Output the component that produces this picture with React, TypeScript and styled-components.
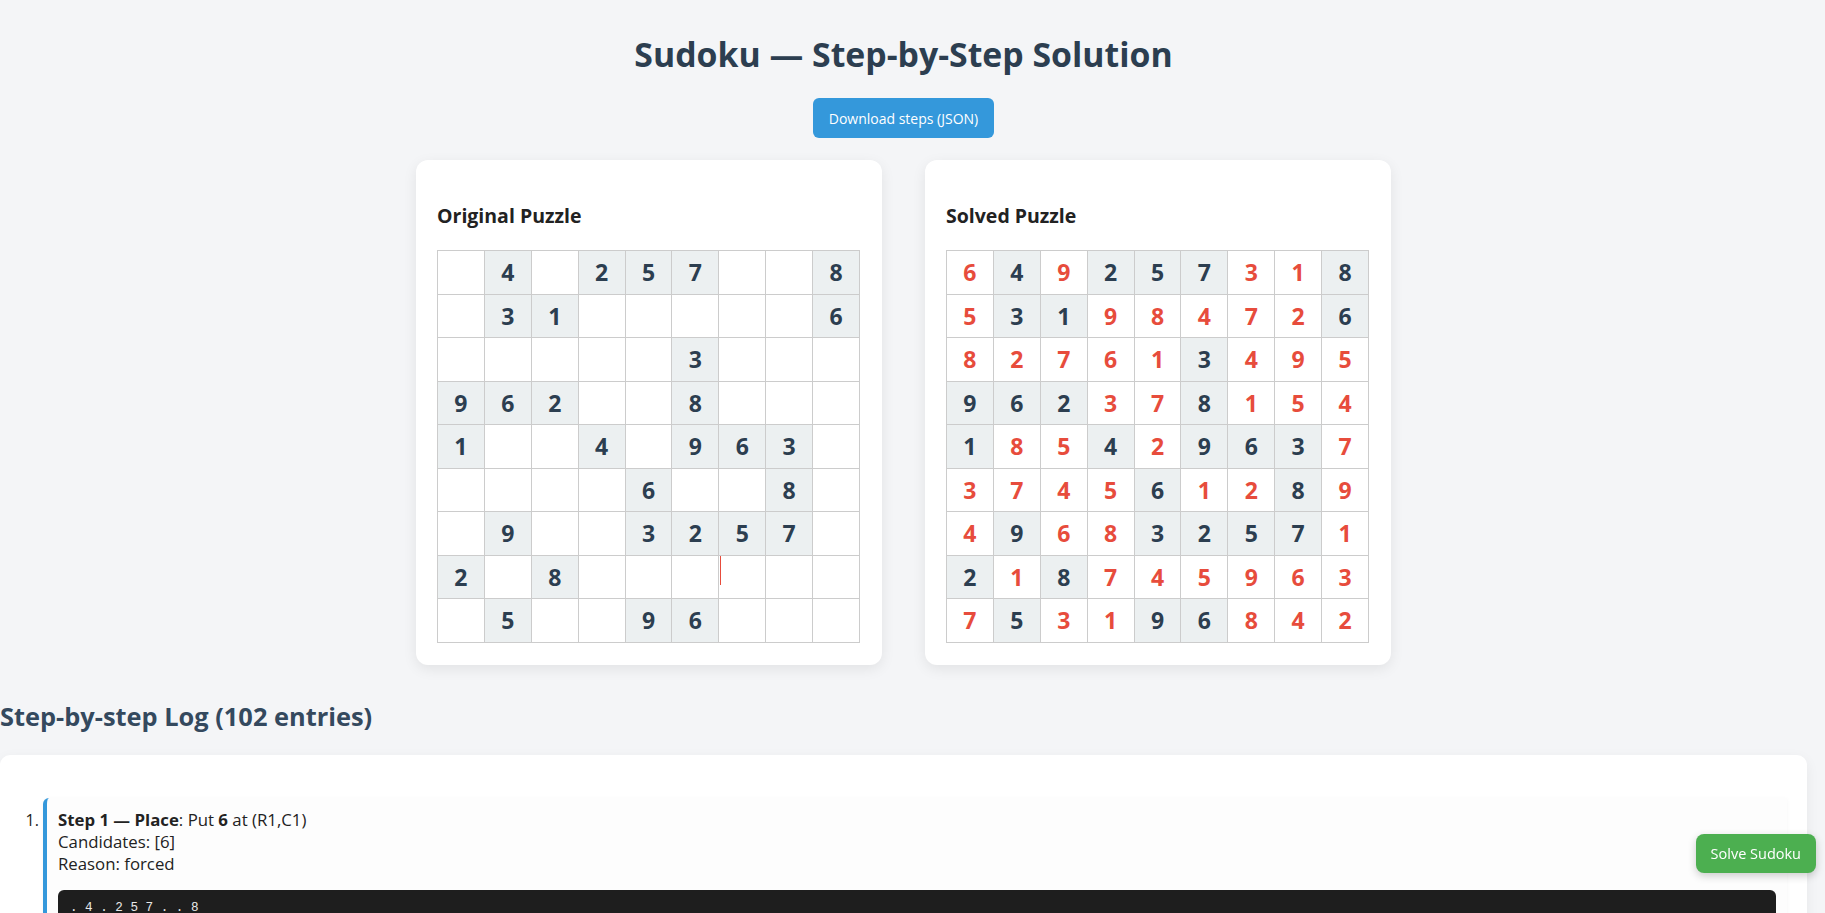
import React from "react";
import styled, { createGlobalStyle } from "styled-components";

const GlobalStyle = createGlobalStyle`
  html, body {
    margin: 0;
    padding: 0;
    background: #f4f5f7;
    font-family: "Open Sans", "Noto Sans", sans-serif;
    color: #222;
  }
  * { box-sizing: border-box; }
`;

const Page = styled.div`
  padding-right: 18px;
`;

const Title = styled.h1`
  margin: 0;
  padding-top: 31px;
  text-align: center;
  font-size: 33.8px;
  line-height: 46px;
  font-weight: 700;
  color: #2c3e50;
`;

const Toolbar = styled.div`
  display: flex;
  justify-content: center;
  margin-top: 21px;
`;

const DownloadButton = styled.button`
  height: 40px;
  padding: 0 16px;
  border: none;
  border-radius: 6px;
  background: #3498db;
  color: #fff;
  font-family: inherit;
  font-size: 14px;
  cursor: pointer;
`;

const Boards = styled.div`
  display: flex;
  justify-content: center;
  gap: 43px;
  margin-top: 22px;
`;

const Card = styled.section`
  width: 466px;
  background: #fff;
  border-radius: 12px;
  box-shadow: 0 4px 14px rgba(0, 0, 0, 0.08);
  padding: 20px 20px 22px 21px;
`;

const CardTitle = styled.h3`
  margin: 0;
  padding-top: 21px;
  font-size: 19.5px;
  line-height: 30px;
  font-weight: 700;
  color: #222;
`;

const Grid = styled.div`
  margin-top: 19px;
  width: 423px;
  display: grid;
  grid-template-columns: repeat(9, 1fr);
  grid-auto-rows: 42.5px;
  gap: 1px;
  padding: 1px;
  background: #cccccc;
`;

const Cell = styled.div<{ $given: boolean; $solved: boolean }>`
  position: relative;
  display: flex;
  align-items: center;
  justify-content: center;
  background: ${(p) => (p.$given ? "#ecf0f1" : "#ffffff")};
  color: ${(p) => (p.$solved ? "#e74c3c" : "#2c3e50")};
  font-size: 23px;
  font-weight: 700;
`;

const Caret = styled.span`
  position: absolute;
  left: 1px;
  top: 0;
  width: 1px;
  height: 29px;
  background: #e74c3c;
`;

const LogHeading = styled.h2`
  margin: 0;
  margin-top: 34px;
  font-size: 25.4px;
  line-height: 34px;
  font-weight: 700;
  color: #34495e;
`;

const LogPanel = styled.div`
  margin-top: 22px;
  background: #fff;
  border-radius: 10px;
  box-shadow: 0 4px 14px rgba(0, 0, 0, 0.06);
  padding: 43px 20px 20px 20px;
`;

const StepList = styled.ol`
  margin: 0;
  padding-left: 23px;
`;

const StepItem = styled.li`
  background: #fdfdfd;
  border-left: 4px solid #3498db;
  border-radius: 6px 0 0 6px;
  box-shadow: 0 1px 4px rgba(0, 0, 0, 0.04);
  padding: 11px 11px 12px 11px;
  font-size: 16.8px;
  line-height: 22px;
  color: #222;
  &::marker {
    font-size: 16px;
  }
`;

const Line = styled.div``;

const Board = styled.pre`
  margin: 15px 0 0 0;
  padding: 10px 12px;
  background: #1e1e1e;
  color: #e8e8e8;
  border-radius: 6px;
  font-family: "Liberation Mono", "DejaVu Sans Mono", monospace;
  font-size: 12.6px;
  line-height: 16px;
`;

const SolveButton = styled.button`
  position: fixed;
  right: 9px;
  bottom: 40px;
  height: 39px;
  padding: 0 15px;
  border: none;
  border-radius: 8px;
  background: #4caf50;
  color: #fff;
  font-family: inherit;
  font-size: 14.5px;
  box-shadow: 0 3px 8px rgba(0, 0, 0, 0.2);
  cursor: pointer;
`;

const original = [
  "040257008",
  "031000006",
  "000003000",
  "962008000",
  "100409630",
  "000060080",
  "090032570",
  "208000000",
  "050096000",
];

const solved = [
  "649257318",
  "531984726",
  "827613495",
  "962378154",
  "185429637",
  "374561289",
  "496832571",
  "218745963",
  "753196842",
];

type BoardProps = { rows: string[]; showSolved: boolean };

function SudokuGrid({ rows, showSolved }: BoardProps) {
  return (
    <Grid>
      {rows.map((row, r) =>
        row.split("").map((ch, c) => {
          const given = original[r][c] !== "0";
          const value = ch === "0" ? "" : ch;
          const caret = !showSolved && r === 7 && c === 6;
          return (
            <Cell key={`${r}-${c}`} $given={given} $solved={showSolved && !given}>
              {value}
              {caret && <Caret />}
            </Cell>
          );
        })
      )}
    </Grid>
  );
}

const boardText = original
  .map((row) => row.split("").map((ch) => (ch === "0" ? "." : ch)).join(" "))
  .join("\n");

export default function App() {
  return (
    <>
      <GlobalStyle />
      <Page>
        <Title>Sudoku — Step-by-Step Solution</Title>
        <Toolbar>
          <DownloadButton>Download steps (JSON)</DownloadButton>
        </Toolbar>
        <Boards>
          <Card>
            <CardTitle>Original Puzzle</CardTitle>
            <SudokuGrid rows={original} showSolved={false} />
          </Card>
          <Card>
            <CardTitle>Solved Puzzle</CardTitle>
            <SudokuGrid rows={solved} showSolved={true} />
          </Card>
        </Boards>
        <LogHeading>Step-by-step Log (102 entries)</LogHeading>
        <LogPanel>
          <StepList>
            <StepItem>
              <Line>
                <b>Step 1 — Place</b>: Put <b>6</b> at (R1,C1)
              </Line>
              <Line>Candidates: [6]</Line>
              <Line>Reason: forced</Line>
              <Board>{boardText}</Board>
            </StepItem>
          </StepList>
        </LogPanel>
      </Page>
      <SolveButton>Solve Sudoku</SolveButton>
    </>
  );
}
